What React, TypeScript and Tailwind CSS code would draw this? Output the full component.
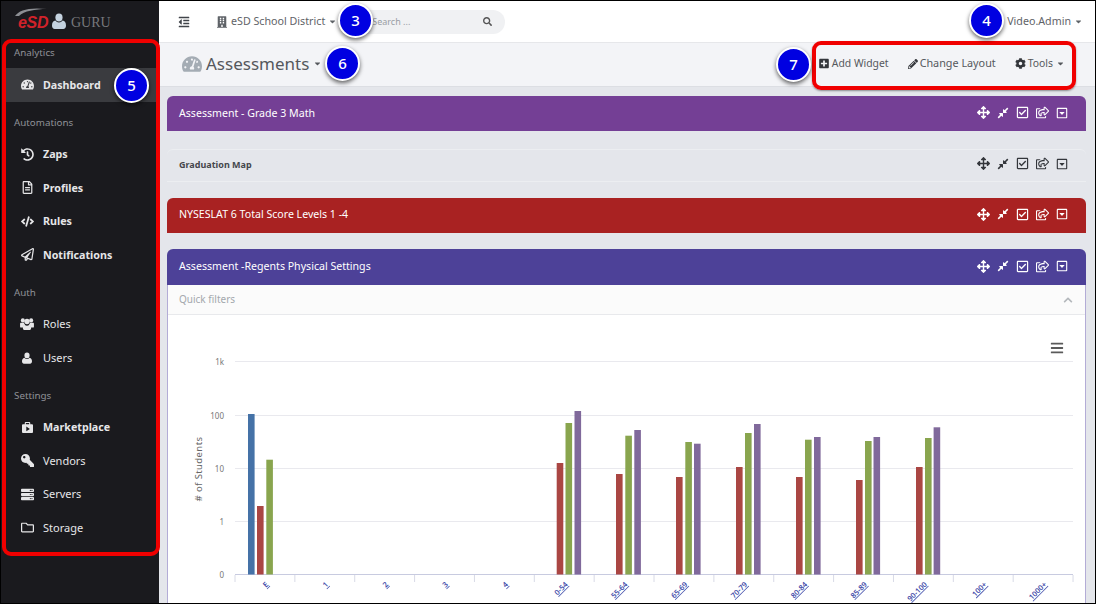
import React from "react";
import {
  FaTachometerAlt, FaHistory, FaRegFileAlt, FaCode, FaRegPaperPlane, FaKey, FaServer, FaRegFolder,
  FaOutdent, FaBuilding, FaSearch, FaPlusSquare, FaPencilAlt, FaCog, FaArrowsAlt, FaCompressAlt, FaRegCheckSquare, FaRegShareSquare, FaRegCaretSquareDown, FaBars, FaChevronUp, FaCaretDown,
} from "react-icons/fa";

const font = "font-['Noto_Sans',sans-serif]";

function UserGlyph({ className }: { className?: string }) {
  return (
    <svg viewBox="0 0 14 16" className={className} fill="currentColor">
      <ellipse cx="7" cy="4.4" rx="3.6" ry="4" />
      <path d="M3.4 7.6C4.3 8.9 5.6 9.4 7 9.4s2.700-.5 3.600-1.800C12.800 8 14 9.800 14 12.600 14 14.600 12.900 16 11.300 16H2.700C1.100 16 0 14.600 0 12.600 0 9.800 1.200 8 3.400 7.600z" />
    </svg>
  );
}

function UsersGlyph() {
  return (
    <svg viewBox="0 0 15 13" className="w-[14px] h-[12px]" fill="currentColor">
      <circle cx="3" cy="2.600" r="2.200" />
      <circle cx="12" cy="2.600" r="2.200" />
      <circle cx="7.500" cy="3.800" r="2.900" />
      <path d="M0 6.200c0-.6.5-1 1-1h3.200c.2 1 .7 1.900 1.300 2.400C4 8.200 3.200 9.300 3 10.400H1c-.6 0-1-.4-1-1V6.200zM15 6.200c0-.6-.5-1-1-1h-3.200c-.2 1-.7 1.900-1.300 2.400 1.500.6 2.300 1.700 2.500 2.800H14c.6 0 1-.4 1-1V6.200z" />
      <path d="M5 7.400c.7.600 1.600 1 2.500 1s1.800-.4 2.500-1c1.300.3 2 1.500 2 3.100 0 1.500-.8 2.500-2 2.500H5c-1.200 0-2-1-2-2.500 0-1.600.7-2.800 2-3.100z" />
    </svg>
  );
}

function BagGlyph() {
  return (
    <svg viewBox="0 0 12 12" className="w-[11px] h-[11px]">
      <path fill="currentColor" fillRule="evenodd" d="M4 0h4c.6 0 1 .4 1 1v1.500h2c.6 0 1 .4 1 1V11c0 .6-.4 1-1 1H1c-.6 0-1-.4-1-1V3.500c0-.6.4-1 1-1h2V1c0-.6.4-1 1-1zm.2 1.200v1.300h3.600V1.200H4.200zM4.700 5v5l3.900-2.500L4.700 5z" />
    </svg>
  );
}

type Item = { label: string; icon: React.ReactNode; bold?: boolean; active?: boolean };
const nav: { title: string; items: Item[] }[] = [
  { title: "Analytics", items: [{ label: "Dashboard", icon: <FaTachometerAlt />, bold: true, active: true }] },
  { title: "Automations", items: [
    { label: "Zaps", icon: <FaHistory />, bold: true },
    { label: "Profiles", icon: <FaRegFileAlt />, bold: true },
    { label: "Rules", icon: <FaCode />, bold: true },
    { label: "Notifications", icon: <FaRegPaperPlane />, bold: true },
  ] },
  { title: "Auth", items: [
    { label: "Roles", icon: <UsersGlyph /> },
    { label: "Users", icon: <UserGlyph className="w-[10px] h-[12px]" /> },
  ] },
  { title: "Settings", items: [
    { label: "Marketplace", icon: <BagGlyph />, bold: true },
    { label: "Vendors", icon: <FaKey className="-scale-x-100" /> },
    { label: "Servers", icon: <FaServer /> },
    { label: "Storage", icon: <FaRegFolder /> },
  ] },
];

function Circle({ n, className }: { n: number; className: string }) {
  return (
    <div className={`absolute w-[35px] h-[35px] rounded-full bg-[#0000e1] border-2 border-white text-white text-[15px] font-medium flex items-center justify-center shadow-[0_2px_4px_rgba(0,0,0,0.6)] ${className}`}>
      {n}
    </div>
  );
}

function PanelIcons({ dark }: { dark?: boolean }) {
  const c = dark ? "text-[#33363b]" : "text-white";
  return (
    <div className={`flex items-center mb-[2px] ${c}`}>
      <FaArrowsAlt className="w-[13px] h-[13px] mr-[7px]" />
      <FaCompressAlt className="w-[12px] h-[12px] mr-[7px]" />
      <FaRegCheckSquare className="w-[13px] h-[13px] mr-[7px]" />
      <FaRegShareSquare className="w-[13px] h-[13px] mr-[7px]" />
      <FaRegCaretSquareDown className="w-[12px] h-[12px]" />
    </div>
  );
}

function Panel({ title, className }: { title: string; className: string }) {
  return (
    <div className={`flex items-center justify-between pl-[12px] pr-[18px] rounded-t-[6px] text-white text-[10.6px] ${className}`}>
      <span>{title}</span>
      <PanelIcons />
    </div>
  );
}

const xLabels = ["E", "1", "2", "3", "4", "0-54", "55-64", "65-69", "70-79", "80-84", "85-89", "90-100", "100+", "1000+"];
const gridY = [361.5, 415.5, 468.5, 521.5];
const yLabels: [string, number][] = [["1k", 361.5], ["100", 415.5], ["10", 468.5], ["1", 521.5], ["0", 574.5]];
const bars: [number, number, string][] = [
  [248, 414, "#4572a7"], [257, 506, "#aa4643"], [266.3, 459.7, "#89a54e"],
  [556.7, 463, "#aa4643"], [565.5, 423, "#89a54e"], [574.5, 411, "#80699b"],
  [616, 474, "#aa4643"], [625.3, 435.7, "#89a54e"], [634.3, 430, "#80699b"],
  [676, 477, "#aa4643"], [685.3, 442, "#89a54e"], [694, 443.7, "#80699b"],
  [736, 467, "#aa4643"], [745, 433, "#89a54e"], [754, 424, "#80699b"],
  [796, 477, "#aa4643"], [805, 439.7, "#89a54e"], [814, 437, "#80699b"],
  [856, 480, "#aa4643"], [865, 441, "#89a54e"], [873.5, 437, "#80699b"],
  [916, 467, "#aa4643"], [925, 438, "#89a54e"], [933.6, 427.3, "#80699b"],
];

function Chart() {
  // chart coordinates are page coordinates, offset by the svg's origin (168, 315)
  return (
    <svg width="917" height="288" viewBox="168 315 917 288" className="block" style={{ fontFamily: "Noto Sans, sans-serif" }}>
      {gridY.map((y) => <line key={y} x1="235" x2="1073" y1={y} y2={y} stroke="#e9e9ee" strokeWidth="1" />)}
      <line x1="235" x2="1073" y1="574.5" y2="574.5" stroke="#c8cbe0" strokeWidth="1" />
      {Array.from({ length: 15 }).map((_, i) => {
        const x = 235 + i * 59.86;
        return <line key={i} x1={x} x2={x} y1="575" y2="582" stroke="#d8dae6" strokeWidth="1" />;
      })}
      {yLabels.map(([t, y]) => (
        <text key={t} x="224" y={y + 3} textAnchor="end" fontSize="8" fill="#777">{t}</text>
      ))}
      <text transform="translate(202 469) rotate(-90)" textAnchor="middle" fontSize="9.5" fill="#666" letterSpacing="0.4"># of Students</text>
      {bars.map(([x, y, c], i) => <rect key={i} x={x} y={y} width="6.6" height={574.5 - y} fill={c} />)}
      {xLabels.map((t, i) => {
        const x = 235 + i * 59.86 + 34;
        return (
          <text key={t} transform={`translate(${x} 585) rotate(-45)`} textAnchor="end" fontSize="7.500" fontWeight="600" fill="#3f4aa8" textDecoration="underline">{t}</text>
        );
      })}
    </svg>
  );
}

export default function App() {
  return (
    <div className={`relative w-[1096px] h-[604px] overflow-hidden border border-black flex bg-[#e4e6eb] ${font}`}>
      <aside className="w-[158px] shrink-0 bg-[#1a1a1e] flex flex-col">
        <div className="h-[31px] flex items-center pl-[14px] pt-[11px]">
          <span className="relative inline-block w-[33px]">
            <svg viewBox="0 0 32 8" className="absolute left-0 -top-[2px] w-[32px] h-[8px]">
              <path d="M0 8C4 2 14 -1 32 1C20 1 9 3 4 8z" fill="#8d8f94" />
            </svg>
            <span className="relative font-['Liberation_Sans',sans-serif] italic font-bold text-[16px] leading-none text-[#d0222a] tracking-[-0.3px] pl-[3px]">eSD</span>
          </span>
          <UserGlyph className="w-[14px] h-[16px] text-[#c4d2df] ml-[4px] mb-[3px]" />
          <span className="font-['Liberation_Serif',serif] text-[14px] text-[#77787c] ml-[5px]">GURU</span>
        </div>
        {nav.map((s) => (
          <div key={s.title}>
            <div className="h-[36px] flex items-center pt-[7px] pl-[13px] text-[9.800px] text-[#8f9197]">{s.title}</div>
            {s.items.map((it) => (
              <div key={it.label} className={`h-[33.5px] flex items-center pl-[15px] ml-[4px] mr-[2px] ${it.active ? "bg-[#3a3b3f]" : ""}`}>
                <span className="w-[14px] h-[14px] flex items-center justify-center text-[13px] text-[#e6e6e8]">{it.icon}</span>
                <span className={`ml-[9px] text-[#e6e6e8] ${it.bold ? "font-bold text-[10.700px]" : "text-[11px]"}`}>{it.label}</span>
              </div>
            ))}
          </div>
        ))}
      </aside>
      <main className="flex-1 min-w-0 flex flex-col">
        <header className="h-[42px] shrink-0 bg-white border-b border-[#e6e7ea] flex items-center text-[#5f6368] text-[10.700px]">
          <FaOutdent className="w-[12px] h-[12px] ml-[19px] text-[#40444a]" />
          <FaBuilding className="w-[10px] h-[12px] ml-[27px] text-[#5f6368]" />
          <span className="ml-[4px]">eSD School District</span>
          <FaCaretDown className="w-[9px] h-[9px] ml-[3px]" />
          <div className="ml-[4px] w-[164px] h-[24px] rounded-full bg-[#f0f1f3] flex items-center justify-between pl-[31px] pr-[13px] text-[9px] text-[#9a9ea4]">
            <span>Search ...</span>
            <FaSearch className="w-[9px] h-[9px] text-[#555]" />
          </div>
          <div className="ml-auto flex items-center pr-[12px]">
            <span>Video.Admin</span>
            <FaCaretDown className="w-[9px] h-[9px] ml-[3px]" />
          </div>
        </header>
        <div className="h-[44px] shrink-0 pb-[2px] bg-[#f3f4f7] border-b border-[#dcdee3] flex items-center text-[#55585d]">
          <FaTachometerAlt className="w-[20px] h-[20px] ml-[23px] text-[#a4acb4]" />
          <span className="ml-[4px] text-[17px] leading-none">Assessments</span>
          <FaCaretDown className="w-[9px] h-[9px] ml-[4px]" />
          <div className="ml-auto flex items-center text-[10.400px] pr-[30px]">
            <FaPlusSquare className="w-[10px] h-[11px] text-[#33363b]" />
            <span className="ml-[3px]">Add Widget</span>
            <FaPencilAlt className="w-[10px] h-[10px] ml-[19px] text-[#33363b]" />
            <span className="ml-[2px] text-[10.800px]">Change Layout</span>
            <FaCog className="w-[11px] h-[11px] ml-[19px] text-[#33363b]" />
            <span className="ml-[2px]">Tools</span>
            <FaCaretDown className="w-[9px] h-[9px] ml-[3px]" />
          </div>
        </div>
        <div className="flex-1 min-h-0 overflow-hidden pt-[9px] pl-[8px] pr-[9px] flex flex-col">
          <Panel title="Assessment - Grade 3 Math" className="h-[35px] shrink-0 bg-[#743f95]" />
          <div className="mt-[18px] h-[33px] shrink-0 pb-[2px] flex items-center justify-between pl-[12px] pr-[18px] rounded-t-[6px] border-b border-t border-[#eceef1] text-[9px] font-bold text-[#44474c]">
            <span>Graduation Map</span>
            <PanelIcons dark />
          </div>
          <Panel title="NYSESLAT 6 Total Score Levels 1 -4" className="mt-[16px] h-[35px] shrink-0 pb-[1px] bg-[#a92222]" />
          <Panel title="Assessment -Regents Physical Settings" className="mt-[16px] h-[36px] shrink-0 bg-[#4d4198]" />
          <div className="relative flex-1 min-h-0 bg-white border-x border-[#b3acd6]">
            <div className="h-[30px] bg-[#fbfbfb] border-b border-[#e8e9ec] flex items-center justify-between pl-[11px] pr-[12px] text-[10px] text-[#a3a8ad]">
              <span>Quick filters</span>
              <FaChevronUp className="w-[10px] h-[10px] text-[#b4b8bc]" />
            </div>
            <Chart />
            <FaBars className="absolute left-[882px] top-[56px] w-[14px] h-[14px] text-[#5a5a5a]" />
          </div>
        </div>
      </main>

      {/* callouts */}
      <div className="absolute left-[1px] top-[38px] w-[158px] h-[517px] border-[4px] border-[#f00000] rounded-[9px] pointer-events-none" />
      <div className="absolute left-[811px] top-[40px] w-[264px] h-[49px] border-[4px] border-[#f00000] rounded-[9px] pointer-events-none shadow-[0_1px_2px_rgba(0,0,0,0.4)]" />
      <Circle n={3} className="left-[337px] top-[2px]" />
      <Circle n={4} className="left-[968px] top-[2px]" />
      <Circle n={5} className="left-[113px] top-[67px]" />
      <Circle n={6} className="left-[324px] top-[45px]" />
      <Circle n={7} className="left-[775px] top-[46px]" />
    </div>
  );
}
